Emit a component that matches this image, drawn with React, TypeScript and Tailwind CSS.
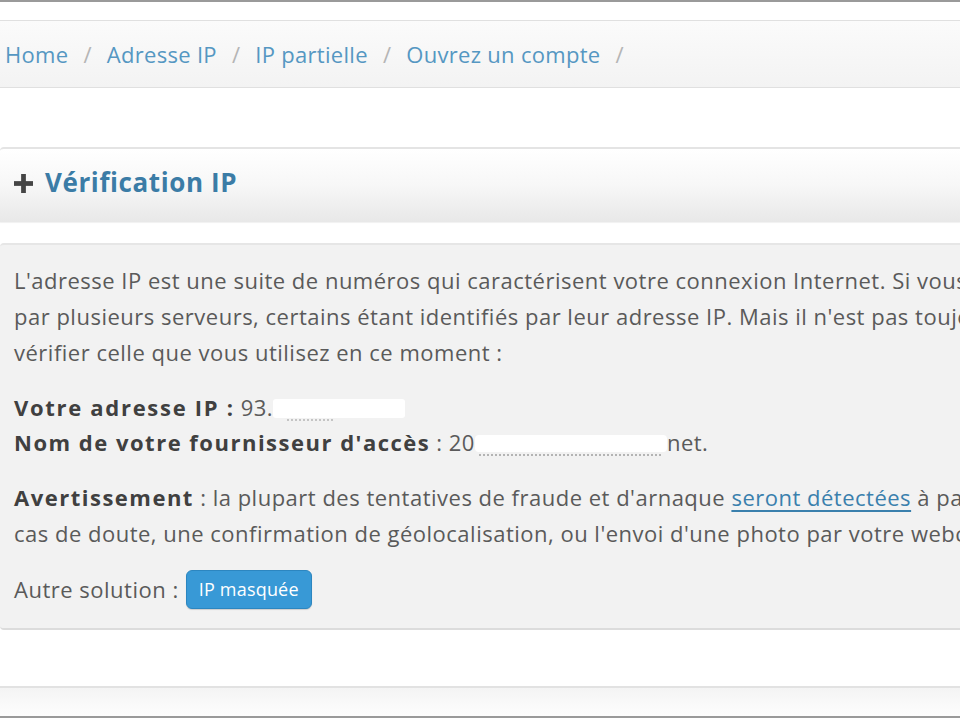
import React from "react";

const font = { fontFamily: '"Open Sans", "Noto Sans", sans-serif' };

function Slash() {
  return <span className="text-[#b5b5b5] px-[15px]">/</span>;
}

export default function App() {
  return (
    <div className="w-[960px] h-[720px] overflow-hidden bg-white flex flex-col" style={font}>
      <div className="h-[2px] bg-[#9a9a9a] shrink-0" />
      <div className="h-[18px] shrink-0" />
      {/* breadcrumb */}
      <div className="h-[68px] shrink-0 border-y border-[#e0e0e0] bg-gradient-to-b from-[#fbfbfb] to-[#f3f3f3] flex items-center pl-[5px] text-[22px] tracking-[0.3px] text-[#5597c2] whitespace-nowrap">
        <span>Home</span>
        <Slash />
        <span>Adresse IP</span>
        <Slash />
        <span>IP partielle</span>
        <Slash />
        <span>Ouvrez un compte</span>
        <Slash />
      </div>
      <div className="h-[59px] shrink-0" />
      {/* panel header */}
      <div className="h-[75px] shrink-0 border-t-2 border-[#e4e4e4] rounded-tl-[4px] bg-gradient-to-b from-[#ffffff] via-[#f7f7f7] to-[#e8e8e8] flex items-center pl-[14px] gap-[12px] shadow-[0_1px_1px_rgba(0,0,0,0.06)]">
        <svg width="19" height="19" viewBox="0 0 20 20" className="shrink-0 -mt-[4px]">
          <rect x="7.5" y="0" width="5" height="20" fill="#454545" />
          <rect x="0" y="7.5" width="20" height="5" fill="#454545" />
        </svg>
        <span className="text-[26px] font-bold text-[#3b7ca6] tracking-[0.6px] -mt-[6px]">Vérification IP</span>
      </div>
      <div className="h-[21px] shrink-0" />
      {/* panel body */}
      <div className="h-[387px] shrink-0 bg-[#f2f2f2] border-t-2 border-[#e6e6e6] border-b-2 border-b-[#dcdcdc] rounded-l-[4px] pl-[14px] pt-[17px] text-[22px] tracking-[0.5px] text-[#5a5a5a] whitespace-nowrap">
        <div className="leading-[36px]">
          <div>L'adresse IP est une suite de numéros qui caractérisent votre connexion Internet. Si vous naviguez sur le web, vous passez</div>
          <div>par plusieurs serveurs, certains étant identifiés par leur adresse IP. Mais il n'est pas toujours facile de la connaître, alors</div>
          <div>vérifier celle que vous utilisez en ce moment :</div>
        </div>
        <div className="leading-[35px] mt-[20px]">
          <div className="flex items-center">
            <span className="font-bold text-[#404040] tracking-[1.7px]">Votre adresse IP :</span>
            <span className="ml-[6px]">93.</span>
            <span className="relative inline-block w-[132px] h-[19px] bg-white rounded-[3px] mt-[2px]">
              <span className="absolute left-[14px] bottom-[-3px] w-[46px] border-b-2 border-dotted border-[#c4c4c4]" />
            </span>
          </div>
          <div className="flex items-center">
            <span className="font-bold text-[#404040] tracking-[1.5px]">Nom de votre fournisseur d'accès</span>
            <span className="ml-[6px]">: 20</span>
            <span className="relative inline-block w-[192px] h-[17px] bg-white rounded-[4px] mt-[1px]">
              <span className="absolute left-[4px] bottom-[-4px] w-[182px] border-b-2 border-dotted border-[#b4b4b4]" />
            </span>
            <span>net.</span>
          </div>
        </div>
        <div className="leading-[36px] mt-[19px]">
          <div>
            <span className="font-bold text-[#404040] tracking-[1.5px]">Avertissement</span> : la plupart des tentatives de fraude et d'arnaque{" "}
            <a className="text-[#3a80ad] underline underline-offset-[4px]">seront détectées</a> à partir de votre adresse IP. En
          </div>
          <div>cas de doute, une confirmation de géolocalisation, ou l'envoi d'une photo par votre webcam pourra vous être demandé.</div>
        </div>
        <div className="mt-[19px] flex items-center h-[39px]">
          <span>Autre solution :</span>
          <span className="ml-[7px] h-[39px] px-[12px] flex items-center rounded-[6px] bg-[#3899d6] border border-[#2c86c0] text-white text-[18px] tracking-[0.2px] shadow-[0_1px_1px_rgba(0,0,0,0.15)]">
            IP masquée
          </span>
        </div>
      </div>
      <div className="h-[56px] shrink-0" />
      <div className="h-[30px] shrink-0 border-t-2 border-[#e2e2e2] bg-gradient-to-b from-[#f4f4f4] to-[#fdfdfd]" />
      <div className="h-[2px] bg-[#9a9a9a] shrink-0" />
    </div>
  );
}
